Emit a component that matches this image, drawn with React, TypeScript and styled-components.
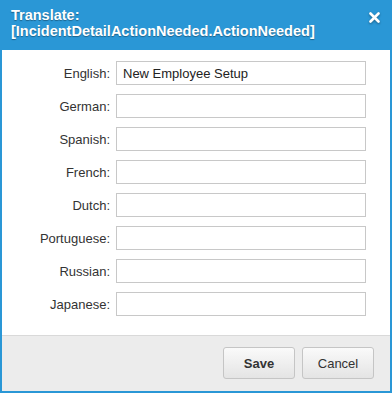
import React from "react";
import styled, { createGlobalStyle } from "styled-components";

const languages = [
  { label: "English", value: "New Employee Setup" },
  { label: "German", value: "" },
  { label: "Spanish", value: "" },
  { label: "French", value: "" },
  { label: "Dutch", value: "" },
  { label: "Portuguese", value: "" },
  { label: "Russian", value: "" },
  { label: "Japanese", value: "" },
];

const App: React.FC = () => {
  const [values, setValues] = React.useState(languages.map((l) => l.value));

  return (
    <>
      <GlobalStyle />
      <Dialog>
        <Header>
          <Title>
            Translate:
            <br />
            [IncidentDetailActionNeeded.ActionNeeded]
          </Title>
          <CloseButton aria-label="Close">
            <svg width="11" height="11" viewBox="0 0 11 11">
              <path
                d="M1.5 1.5 L9.5 9.5 M9.5 1.5 L1.5 9.5"
                stroke="#fff"
                strokeWidth="2.6"
                strokeLinecap="round"
              />
            </svg>
          </CloseButton>
        </Header>
        <Body>
          {languages.map((lang, i) => (
            <Row key={lang.label}>
              <Label>{lang.label}:</Label>
              <Input
                value={values[i]}
                onChange={(e) => {
                  const next = [...values];
                  next[i] = e.target.value;
                  setValues(next);
                }}
              />
            </Row>
          ))}
        </Body>
        <Footer>
          <Button primary>Save</Button>
          <Button>Cancel</Button>
        </Footer>
      </Dialog>
    </>
  );
};

export default App;

const GlobalStyle = createGlobalStyle`
  html, body {
    margin: 0;
    padding: 0;
    background: #fff;
  }
  body {
    font-family: "Liberation Sans", Arial, sans-serif;
  }
`;

const Dialog = styled.div`
  box-sizing: border-box;
  width: 392px;
  height: 393px;
  border: 2px solid #2a97d6;
  border-top: none;
  display: flex;
  flex-direction: column;
  background: #fff;
`;

const Header = styled.div`
  background: #2a97d6;
  height: 50px;
  margin: 0 -2px;
  padding: 7px 12px 0 11px;
  box-sizing: border-box;
  display: flex;
  justify-content: space-between;
  align-items: flex-start;
`;

const Title = styled.div`
  color: #fff;
  font-weight: bold;
  font-size: 14.5px;
  line-height: 16px;
  text-shadow: 0 1px 1px rgba(0, 0, 0, 0.35);
`;

const CloseButton = styled.button`
  border: none;
  background: none;
  padding: 0;
  margin-top: 5px;
  width: 11px;
  height: 11px;
  display: flex;
  filter: drop-shadow(0 1px 1px rgba(0, 0, 0, 0.35));
  cursor: pointer;
`;

const Body = styled.div`
  flex: 1;
  padding: 11px 0 0 0;
  display: flex;
  flex-direction: column;
  gap: 9px;
`;

const Row = styled.div`
  display: flex;
  align-items: center;
`;

const Label = styled.label`
  width: 108px;
  padding-right: 6px;
  text-align: right;
  font-size: 13px;
  color: #333;
`;

const Input = styled.input`
  box-sizing: border-box;
  width: 250px;
  height: 24px;
  border: 1px solid #c8c8c8;
  border-radius: 0;
  padding: 0 6px;
  font-family: "Liberation Sans", Arial, sans-serif;
  font-size: 13px;
  color: #222;
  background: #fff;
  outline: none;
  &:focus {
    border-color: #2a97d6;
  }
`;

const Footer = styled.div`
  height: 56px;
  box-sizing: border-box;
  border-top: 1px solid #d9d9d9;
  background: #ececec;
  display: flex;
  justify-content: flex-end;
  align-items: flex-start;
  gap: 7px;
  padding: 11px 16px 0 0;
`;

const Button = styled.button<{ primary?: boolean }>`
  box-sizing: border-box;
  width: 72px;
  height: 32px;
  border: 1px solid #c5c5c5;
  border-radius: 3px;
  background: linear-gradient(#fafafa, #e4e4e4);
  font-family: "Liberation Sans", Arial, sans-serif;
  font-size: 13px;
  font-weight: ${(p) => (p.primary ? "bold" : "normal")};
  color: #333;
  cursor: pointer;
`;
